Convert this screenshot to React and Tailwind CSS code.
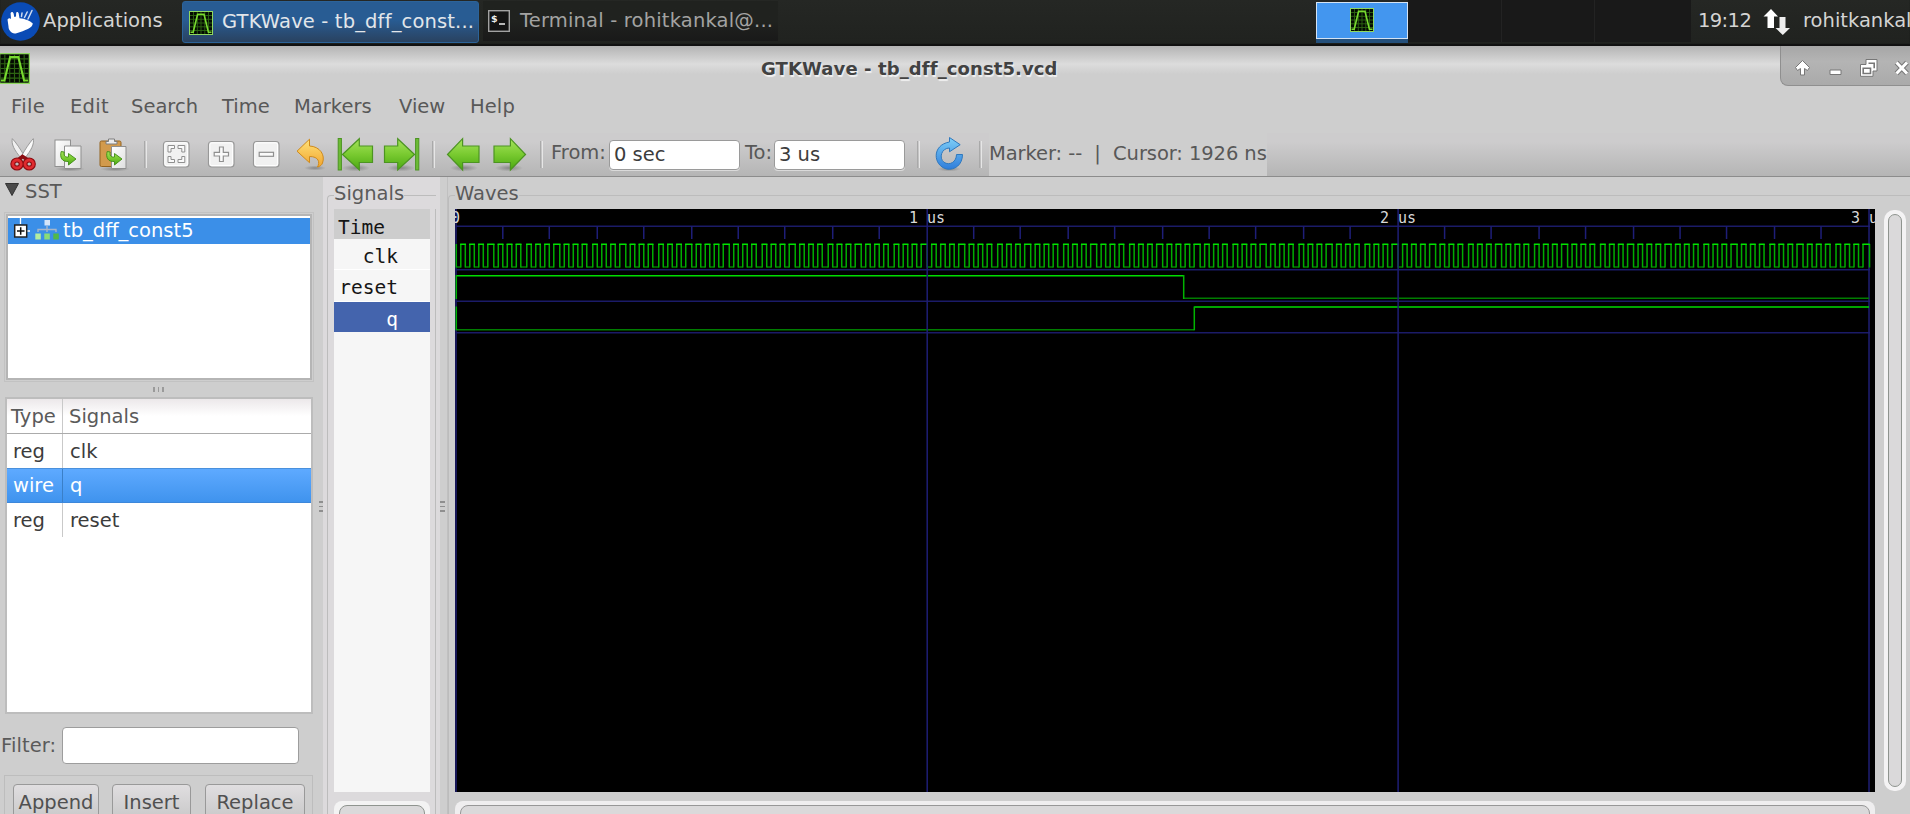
import React from "react";

const UNIT = 1.4997;
const X0 = 1.3;
const gx = (u) => +(X0 + u * UNIT).toFixed(2);

function clockPaths() {
  let high = "";
  let low = "";
  let edges = "";
  for (let k = 0; k < 300; k++) {
    const a = gx(Math.floor(k * 3.14 + 1e-6));
    const b = gx(Math.floor((k + 1) * 3.14 + 1e-6));
    if (k % 2) high += `M${a - 0.7} 35.2H${b + 0.7}`;
    else low += `M${a} 58H${b}`;
    edges += `M${a} 35V58.6`;
  }
  edges += `M${gx(942) + 0.5} 35V58.6`;
  return { high, low, edges };
}
const CLK = clockPaths();

const TICKS = Array.from({ length: 29 }, (_, i) => i + 1)
  .filter((i) => i % 10)
  .map((i) => `M${gx(Math.floor(i * 31.4 + 1e-6))} 17.3V30`)
  .join("");

function WaveIcon({ className }) {
  return (
    <svg viewBox="0 0 24 24" className={className}>
      <rect x="0.5" y="0.5" width="23" height="23" fill="#040a02" stroke="#8fd860" />
      <path d="M4.500 1V23M8.300 1V23M12 1V23M15.800 1V23M19.500 1V23M1 4.500H23M1 8.300H23M1 12H23M1 15.800H23M1 19.500H23" stroke="#2d6412" strokeWidth="0.9" />
      <path d="M1.500 21.300H4.200L8.600 3.200H15L19.400 21.300H22.500" fill="none" stroke="#78da30" strokeWidth="1.600" />
    </svg>
  );
}

function Defs() {
  return (
    <svg className="absolute h-0 w-0">
      <defs>
        <linearGradient id="green" x1="0" y1="0" x2="0" y2="1">
          <stop offset="0" stopColor="#a5e35c" />
          <stop offset="0.5" stopColor="#79ca30" />
          <stop offset="1" stopColor="#4ba812" />
        </linearGradient>
        <linearGradient id="gold" x1="0" y1="0" x2="0" y2="1">
          <stop offset="0" stopColor="#ffe27a" />
          <stop offset="1" stopColor="#f2a52e" />
        </linearGradient>
        <linearGradient id="blue" x1="0" y1="0" x2="0" y2="1">
          <stop offset="0" stopColor="#7fd0f8" />
          <stop offset="1" stopColor="#2e7ddb" />
        </linearGradient>
        <linearGradient id="paper" x1="0" y1="0" x2="1" y2="1">
          <stop offset="0" stopColor="#ffffff" />
          <stop offset="1" stopColor="#dedede" />
        </linearGradient>
        <radialGradient id="shade">
          <stop offset="0" stopColor="#000" stopOpacity="0.28" />
          <stop offset="1" stopColor="#000" stopOpacity="0" />
        </radialGradient>
      </defs>
    </svg>
  );
}

const ICON = "-mt-[2px] mr-[2px] block h-[36px] w-[40px] shrink-0";

function Scissors() {
  return (
    <svg viewBox="0 0 40 36" className={ICON}>
      <path d="M9.300 2.600C8.200 8 11 14 18.300 22.400L21.400 20.200C17.500 13 13 6.500 9.300 2.600Z" fill="#f0f0f0" stroke="#9a9a9a" />
      <path d="M30.300 2.600C31.400 8 28.500 14 21.500 22.400L18.400 20.200C22.300 13 26.700 6.500 30.300 2.600Z" fill="#fafafa" stroke="#9a9a9a" />
      <ellipse cx="14" cy="28" rx="4.200" ry="4" fill="none" stroke="#8c0d12" strokeWidth="5" />
      <ellipse cx="26.200" cy="28" rx="4.200" ry="4" fill="none" stroke="#8c0d12" strokeWidth="5" />
      <path d="M15 24L19.500 20.500L25 24" fill="none" stroke="#8c0d12" strokeWidth="3.600" />
      <ellipse cx="14" cy="28" rx="4.200" ry="4" fill="none" stroke="#e02b2f" strokeWidth="2.800" />
      <ellipse cx="26.200" cy="28" rx="4.200" ry="4" fill="none" stroke="#e02b2f" strokeWidth="2.800" />
    </svg>
  );
}

function GreenHook() {
  return (
    <path d="M14.200 15.500C12.500 21.500 15 26 21.500 25.500V29L29 23L21.500 17.500V21C18 21.500 16.500 19.500 17.200 16Z" fill="url(#green)" stroke="#3e8b14" strokeWidth="0.9" />
  );
}

function CopyIcon() {
  return (
    <svg viewBox="0 0 40 36" className={ICON}>
      <ellipse cx="22" cy="33" rx="15" ry="2.500" fill="url(#shade)" />
      <rect x="7" y="4" width="15.500" height="26.500" fill="url(#paper)" stroke="#8f8f8f" />
      <path d="M16.500 10H33V32.500H16.500Z" fill="url(#paper)" stroke="#8f8f8f" />
      <g transform="translate(-1 0)"><GreenHook /></g>
    </svg>
  );
}

function PasteIcon() {
  return (
    <svg viewBox="0 0 40 36" className={ICON}>
      <ellipse cx="22" cy="33" rx="15" ry="2.500" fill="url(#shade)" />
      <rect x="7" y="5" width="21" height="25.500" rx="1.500" fill="#d29a4c" stroke="#93621f" />
      <path d="M13 8V5.500H15.500V3H21.500V5.500H24V8Z" fill="#ececec" stroke="#7d7d7d" />
      <path d="M18.500 10.500H33V32.500H18.500Z" fill="url(#paper)" stroke="#8f8f8f" />
      <GreenHook />
    </svg>
  );
}

function ZoomBox({ kind }) {
  return (
    <svg viewBox="0 0 40 36" className={ICON}>
      <rect x="7.500" y="5.500" width="25.500" height="25.500" rx="3" fill="#f1f1f1" stroke="#989898" strokeWidth="1.200" />
      <rect x="8.900" y="6.900" width="22.700" height="22.700" rx="2" fill="none" stroke="#fff" />
      {kind === "fit" && (
        <path d="M12 9.500H18.500V12.500H15V16H12ZM28.800 9.500H22V12.500H25.800V16H28.800ZM12 26.500H18.500V23.500H15V20.500H12ZM28.800 26.500H22V23.500H25.800V20.500H28.800Z" fill="#fafafa" stroke="#8f8f8f" strokeWidth="1" />
      )}
      {kind === "in" && (
        <path d="M18.500 11H22.300V16.300H27.500V20H22.300V25.500H18.500V20H13.200V16.300H18.500Z" fill="#fafafa" stroke="#8f8f8f" strokeWidth="1.200" />
      )}
      {kind === "out" && <rect x="13.200" y="16.300" width="14.300" height="4" fill="#fafafa" stroke="#8f8f8f" strokeWidth="1.200" />}
    </svg>
  );
}

function Undo() {
  return (
    <svg viewBox="0 0 40 36" className={ICON}>
      <ellipse cx="24" cy="32" rx="11" ry="2.500" fill="url(#shade)" />
      <path d="M6 15.200L18.500 3.200V10C29 10.500 34.500 19 31.500 27C31 28.700 29 30.600 26.500 31C29 26.500 28 20.500 18.500 20.500V26.700Z" fill="url(#gold)" stroke="#cf8a1c" strokeWidth="1" />
    </svg>
  );
}

function GreenArrow({ flip, bar }) {
  return (
    <svg viewBox="0 0 40 36" className={ICON}>
      <g transform={flip ? "translate(40 0) scale(-1 1)" : undefined}>
        <ellipse cx="20" cy="32" rx="14" ry="3.500" fill="url(#shade)" />
        <path
          d={bar ? "M6.500 18.500L23.300 2.700V10H36.500V26.500H23.300V34Z" : "M3.500 18.500L18.600 2.700V10H35V26.500H18.600V34Z"}
          fill="url(#green)"
          stroke="#4c9422"
          strokeWidth="1.200"
        />
        {bar && <rect x="2.200" y="2.500" width="3.200" height="31.500" fill="#6cbb35" stroke="#4c9422" />}
      </g>
    </svg>
  );
}

function Reload() {
  return (
    <svg viewBox="0 0 40 36" className={ICON}>
      <ellipse cx="20" cy="33" rx="12" ry="2.500" fill="url(#shade)" />
      <path d="M20.500 1.500L31.200 8.700L20.500 15.800V12C12.500 12 9.500 22 15 26.300C20.500 30 27.500 26 27.500 18.500H33.500C33.500 29 25.500 34.500 17.500 33C4 29.500 2.500 9 20.500 6Z" fill="url(#blue)" stroke="#2f78bd" strokeWidth="1" />
    </svg>
  );
}

const Slot = ({ children }) => <div className="flex w-[45px] shrink-0 justify-center">{children}</div>;
const Sep = () => (
  <div className="flex w-[18px] shrink-0 justify-center">
    <div className="h-[27px] w-[3px] border-l border-r border-l-[#a9a9a9] border-r-[#e6e6e6]" />
  </div>
);

function TopPanel() {
  return (
    <header className="flex h-[46px] w-full shrink-0 overflow-hidden bg-linear-to-b from-[#252724] to-[#20221f] text-[19.5px] leading-[42px] whitespace-nowrap text-[#d4d4d3] shadow-[inset_0_-2px_1px_#101010]">
      <div className="w-[43px] shrink-0 pt-[2px] pl-px">
        <svg viewBox="0 0 39 39" className="block h-[39px] w-[39px]">
          <circle cx="19.500" cy="19.500" r="19.300" fill="#0a4bb5" />
          <path d="M6.500 17.500C8 15.500 9 16 10 17L9.600 11C10.400 9.300 12.200 9.800 12.600 11.500L13.300 15L15 14.500L15.200 10.500C16 9.500 17.500 10 17.700 11.500L18.500 16.200C24 16.500 29 19 31.700 21.300C32 26 24 28.500 15.500 31.200C10.500 32.500 7.500 28 7.500 24.500Z" fill="#fff" />
          <path d="M23.500 15.500L26.200 10M27 17L31 8.500M20.500 14.500L21 11" stroke="#fff" strokeWidth="1.500" strokeLinecap="round" opacity="0.8" />
        </svg>
      </div>
      <div className="w-[139px] shrink-0 tracking-[0.05px]">Applications</div>
      <div className="mt-px flex h-[42px] w-[297px] shrink-0 items-center rounded-[3px] border border-[#2c6399] bg-linear-to-b from-[#285c93] from-45% to-[#294260] pl-[6px] text-[#e2e6ea]">
        <WaveIcon className="mt-px mr-[9px] block h-[24px] w-[24px] shrink-0" />
        <span className="tracking-[0.15px]">GTKWave - tb_dff_const...</span>
      </div>
      <div className="mt-px ml-[4px] flex h-[40px] w-[295px] shrink-0 items-center bg-linear-to-b from-[#20221f] from-50% to-[#191919] pl-[5px] text-[#a3a3a2]">
        <svg viewBox="0 0 22 22" className="mr-[10px] block h-[22px] w-[22px] shrink-0">
          <rect x="0.700" y="0.700" width="20.600" height="20.600" fill="#141414" stroke="#a2a2a2" strokeWidth="1.400" />
          <text x="3" y="12" fontSize="9.500" fontWeight="bold" fill="#eee">$</text>
          <path d="M11 14H17" stroke="#eee" strokeWidth="1.500" />
        </svg>
        <span className="tracking-[0.18px]">Terminal - rohitkankal@...</span>
      </div>
      <div className="mt-[2px] ml-[538px] h-[41px] w-[92px] shrink-0 border-b-[4px] border-[#25507b]">
        <div className="flex h-[37px] justify-center border-[1.5px] border-[#d5e3f3] bg-[#4396ef] pt-[5px]">
          <WaveIcon className="block h-[24px] w-[24px]" />
        </div>
      </div>
      <div className="flex h-[42px] w-[283px] shrink-0 gap-px bg-[#232323]">
        <div className="w-[93px] bg-[#191919]" />
        <div className="w-[92px] bg-[#191919]" />
        <div className="w-[96px] bg-[#191919]" />
      </div>
      <div className="w-[72px] shrink-0 pl-[7px] tracking-[-0.6px]">19:12</div>
      <svg viewBox="0 0 28 28" className="mt-[8px] block h-[28px] w-[28px] shrink-0">
        <path d="M8 1L15 8.500H11V20H4.500V8.500H0.500Z" fill="#fff" />
        <path d="M16.500 9H22.500V20H27L19.800 27L12.500 20H16.500Z" fill="#eee" />
      </svg>
      <div className="ml-[11px] w-[108px] shrink-0 overflow-hidden pl-px">rohitkankal</div>
    </header>
  );
}

function TitleBar() {
  return (
    <div className="flex h-[40px] w-full shrink-0 bg-linear-to-b from-[#b4b4b4] via-[#dcdcdc] via-45% to-[#cecece] to-70%">
      <div className="w-[761px] pt-[7px]">
        <WaveIcon className="-ml-px block h-[31px] w-[31px]" />
      </div>
      <div className="flex-1 pt-[8px] text-[18px] leading-[30px] font-bold tracking-[0.1px] whitespace-nowrap text-[#424242] [text-shadow:1px_1.500px_1px_#f2f2f2]">
        GTKWave - tb_dff_const5.vcd
      </div>
      <div className="h-[40px] w-[130px] overflow-hidden rounded-bl-[8px] border-b-[1.500px] border-l border-[#8f8f8f] bg-linear-to-b from-[#a6a6a6] via-[#b4b4b4] via-40% to-[#aaaaaa]">
        <svg viewBox="0 0 130 40" className="block h-[40px] w-[130px]">
          <g fill="#fff" stroke="#777" strokeWidth="1" strokeLinejoin="round">
            <path d="M21.500 14.500L28.500 21.500L26.500 24.500L23.500 22.500V29H19.500V22.500L16.500 24.500L14.500 21.500Z" />
            <rect x="49" y="24" width="11" height="4.500" />
            <path d="M85 13.500H96V25H92V30.300H79.500V18.500H85Z" />
          </g>
          <path d="M82.200 22.300H89.500V27.500H82.200ZM87.500 17.300H93.200V22.300" fill="none" stroke="#777" strokeWidth="1.600" />
          <path d="M115.500 16.500L126 27.500M126 16.500L115.500 27.500" stroke="#777" strokeWidth="5" />
          <path d="M115.500 16.500L126 27.500M126 16.500L115.500 27.500" stroke="#fff" strokeWidth="3" />
        </svg>
      </div>
    </div>
  );
}

function MenuBar() {
  return (
    <nav className="flex h-[47px] shrink-0 pl-[11px] text-[19.5px] leading-[41px] text-[#585858]">
      <span className="w-[59px] tracking-[0.4px]">File</span>
      <span className="w-[61px] tracking-[0.3px]">Edit</span>
      <span className="w-[91px]">Search</span>
      <span className="w-[72px]">Time</span>
      <span className="w-[105px]">Markers</span>
      <span className="w-[71px]">View</span>
      <span className="tracking-[0.1px]">Help</span>
    </nav>
  );
}

function Toolbar() {
  return (
    <div className="flex h-[44px] w-full shrink-0 items-center overflow-hidden border-b border-[#8c8c8c] bg-linear-to-b from-[#cdcccd] from-20% to-[#b5b5b5] pl-px text-[19.5px] whitespace-nowrap text-[#585858]">
      <Slot><Scissors /></Slot>
      <Slot><CopyIcon /></Slot>
      <Slot><PasteIcon /></Slot>
      <Sep />
      <Slot><ZoomBox kind="fit" /></Slot>
      <Slot><ZoomBox kind="in" /></Slot>
      <Slot><ZoomBox kind="out" /></Slot>
      <Slot><Undo /></Slot>
      <Slot><GreenArrow bar /></Slot>
      <Slot><GreenArrow bar flip /></Slot>
      <Sep />
      <Slot><GreenArrow /></Slot>
      <Slot><GreenArrow flip /></Slot>
      <Sep />
      <div className="-mt-[3px] w-[59px] shrink-0 pl-px">From:</div>
      <Field>0 sec</Field>
      <div className="-mt-[3px] w-[34px] shrink-0 pl-[5px]">To:</div>
      <Field>3 us</Field>
      <div className="ml-[4px]"><Sep /></div>
      <Slot><Reload /></Slot>
      <div className="-ml-px"><Sep /></div>
      <div className="h-[44px] w-[278px] shrink-0 bg-[#cecece] leading-[41px] tracking-[-0.08px] whitespace-pre">{"Marker: --  |  Cursor: 1926 ns"}</div>
    </div>
  );
}

function Field({ children }) {
  return (
    <div className="h-[30px] w-[131px] shrink-0 rounded-[4px] border-[1.500px] border-[#9a9a9a] bg-white pl-[4px] leading-[28px] text-[#3c3c3c] shadow-[0_1px_0_#dadada]">
      {children}
    </div>
  );
}

const ROWS = [
  ["reg", "clk"],
  ["wire", "q"],
  ["reg", "reset"],
];

function SidePanel() {
  return (
    <aside className="flex h-full w-[323px] shrink-0 flex-col overflow-hidden text-[19.5px] whitespace-nowrap text-[#5a5a5a]">
      <div className="flex h-[35px] shrink-0">
        <svg viewBox="0 0 14 13" className="mt-[6px] ml-[5px] block h-[13px] w-[14px]">
          <path d="M0.500 0.500H13.500L7 12.500Z" fill="#4a4a4a" stroke="#333" />
        </svg>
        <span className="ml-[6px] leading-[30px]">SST</span>
      </div>
      <div className="ml-[4px] h-[170px] w-[310px] shrink-0 border border-[#c2c2c2] p-px">
        <div className="h-full border-2 border-[#b5b5b5] bg-white">
          <div className="mt-[2px] flex h-[26px] bg-[#3b8fe8] text-white">
            <svg viewBox="0 0 56 26" className="-ml-px block h-[26px] w-[56px] shrink-0">
              <path d="M13.500 0V6M20 13H23" stroke="#fff" strokeWidth="1.300" />
              <rect x="7.700" y="7" width="12" height="12" fill="#fff" stroke="#222" strokeWidth="1.500" />
              <path d="M10 13H17.500M13.700 9.300V16.700" stroke="#111" strokeWidth="1.500" />
              <path d="M31 14V11.500H49V14M40 8V14" fill="none" stroke="#a7b6c9" strokeWidth="1.400" />
              <rect x="37.500" y="2" width="5.500" height="5.500" fill="#d3e5fa" />
              <rect x="28.300" y="15.500" width="5.500" height="6" fill="#b4eda0" />
              <rect x="37.300" y="15.500" width="5.500" height="6" fill="#8bdc78" />
              <rect x="46.300" y="15.500" width="5.500" height="6" fill="#52b848" />
            </svg>
            <span className="leading-[25px]">tb_dff_const5</span>
          </div>
        </div>
      </div>
      <div className="flex h-[15px] shrink-0 items-center gap-[3px] pl-[153px]">
        <i className="h-[5px] w-[1.500px] bg-[#9a9a9a]" />
        <i className="h-[5px] w-[1.500px] bg-[#9a9a9a]" />
        <i className="h-[5px] w-[1.500px] bg-[#9a9a9a]" />
      </div>
      <div className="ml-[5px] flex h-[317px] w-[308px] shrink-0 flex-col border-2 border-[#bdbdbd] bg-white">
        <div className="flex h-[35px] border-b border-[#ababab] bg-linear-to-b from-[#ece8ea] to-white to-50% leading-[36px]">
          <div className="w-[56px] border-r border-[#c9c9c9] pl-[4px]">Type</div>
          <div className="pl-[6px]">Signals</div>
        </div>
        {ROWS.map(([t, s], i) =>
          i === 1 ? (
            <div key={s} className="flex h-[35px] border-t border-b border-t-[#4a90dc] border-b-[#3d87da] bg-linear-to-b from-[#5eaaff] to-[#3f93ee] leading-[34px] text-white">
              <div className="w-[56px] border-r border-[#3a7fc8] pl-[6px]">{t}</div>
              <div className="pl-[7px]">{s}</div>
            </div>
          ) : (
            <div key={s} className="flex h-[34px] leading-[35px] text-[#3c3c3c]">
              <div className="w-[56px] border-r border-[#c9c9c9] pl-[6px]">{t}</div>
              <div className="pl-[7px]">{s}</div>
            </div>
          )
        )}
      </div>
      <div className="flex h-[61px] shrink-0 pt-[13px] pl-px">
        <span className="w-[61px] leading-[37px] tracking-[0.1px]">Filter:</span>
        <div className="h-[37px] w-[237px] rounded-[4px] border-[1.500px] border-[#9d9d9d] bg-white" />
      </div>
      <div className="ml-[4px] flex h-[60px] w-[309px] shrink-0 border border-[#bdbdbd] pt-[8px] pl-[8px] text-center leading-[36px] text-[#505050]">
        <div className="h-[40px] w-[86px] shrink-0 rounded-[4px] border border-[#999] bg-linear-to-b from-[#e0dee0] to-[#c6c6c6]">Append</div>
        <div className="ml-[13px] h-[40px] w-[79px] shrink-0 rounded-[4px] border border-[#999] bg-linear-to-b from-[#e0dee0] to-[#c6c6c6]">Insert</div>
        <div className="ml-[14px] h-[40px] w-[100px] shrink-0 rounded-[4px] border border-[#999] bg-linear-to-b from-[#e0dee0] to-[#c6c6c6]">Replace</div>
      </div>
    </aside>
  );
}

function Legend({ children }) {
  return (
    <div className="flex h-[32px] shrink-0 text-[19.5px] leading-[33px] text-[#5a5a5a]">
      <div className="mt-[18px] h-[14px] w-[7px] shrink-0 rounded-tl-[4px] border-t border-l border-[#bcbcbc]" />
      <span className="shrink-0">{children}</span>
      <div className="mt-[18px] h-px flex-1 bg-[#bcbcbc]" />
    </div>
  );
}

function Grip() {
  return (
    <div className="flex flex-col gap-[3px]">
      <i className="h-[1.500px] w-[5px] bg-[#8f8f8f]" />
      <i className="h-[1.500px] w-[5px] bg-[#8f8f8f]" />
      <i className="h-[1.500px] w-[5px] bg-[#8f8f8f]" />
    </div>
  );
}

function SignalsPanel() {
  return (
    <section className="flex h-full w-[117px] shrink-0 flex-col bg-[#dcdadc]">
      <div className="ml-[4px] flex h-full w-[109px] flex-col">
        <Legend>Signals</Legend>
        <div className="flex flex-1 flex-col border-r border-l border-[#bcbcbc] pr-[5px] pl-[6px] font-['DejaVu_Sans_Mono',monospace] text-[19.5px] whitespace-pre text-[#151515]">
          <div className="h-[30px] bg-[#cdcdcd] pl-[4px] leading-[37px]">Time</div>
          <div className="h-[31px] border-b border-white bg-[#f6f6f6] pr-[32px] text-right leading-[35px]">clk</div>
          <div className="h-[31.500px] border-b border-white bg-[#f6f6f6] pr-[32px] text-right leading-[35px]">reset</div>
          <div className="h-[30px] bg-[#4464ad] pr-[32px] text-right leading-[36px] text-white">q</div>
          <div className="h-[460.500px] bg-[#f6f6f6]" />
          <div className="mt-[9px] h-[13px] overflow-hidden rounded-t-[8px] bg-[#f3f3f3] px-[5px] pt-[4px]">
            <div className="h-[30px] rounded-[8px] border-[1.500px] border-[#8f948f] bg-[#dad9da]" />
          </div>
        </div>
      </div>
    </section>
  );
}

function WaveView() {
  return (
    <svg viewBox="0 0 1420 583" className="block h-[583px] w-[1420px] shrink-0 bg-black">
      <g fill="none" strokeWidth="1.500">
        <path d="M1.300 17.300H1415M1.300 60.700H1415M1.300 92.200H1415M1.300 123.700H1415" stroke="#1b1b68" />
        <path d={TICKS} stroke="#1e1e78" />
        <path d={`M1 0V583M${gx(942)} 0V583`} stroke="#1e1e74" />
        <path d={CLK.low} stroke="#007d00" />
        <path d={CLK.edges} stroke="#00ac00" />
        <path d={CLK.high} stroke="#00e400" />
        <path d="M1.300 66.700H728.700M739.300 98H1414" stroke="#00dc00" />
        <path d="M728.700 89.300H1414M1.300 120.700H739.300" stroke="#007d00" />
        <path d="M1.300 66V90M728.700 66V90M1.300 97.500V121.300M739.300 97.500V121.300" stroke="#00b400" />
        <path d={`M${gx(314)} 0V583M${gx(628)} 0V583`} stroke="#1e1e74" />
      </g>
      <g fill="#d8d8d8" fontFamily="DejaVu Sans Mono, monospace" fontSize="15">
        <text x="-4" y="13.500">0</text>
        <text x="454" y="13.500">1 us</text>
        <text x="925" y="13.500">2 us</text>
        <text x="1396" y="13.500">3 us</text>
      </g>
    </svg>
  );
}

function WavesPanel() {
  return (
    <section className="flex h-full min-w-0 flex-1 flex-col">
      <Legend>Waves</Legend>
      <div className="flex min-h-0 flex-1 border-l border-[#bcbcbc] pl-[6px]">
        <div className="flex w-[1420px] shrink-0 flex-col">
          <WaveView />
          <div className="mt-[9px] h-[13px] overflow-hidden rounded-t-[8px] bg-[#efeeef] px-[5px] pt-[4px]">
            <div className="h-[30px] rounded-[8px] border-[1.500px] border-[#979797] bg-[#dad9da]" />
          </div>
        </div>
        <div className="mt-px ml-[9px] h-[581px] w-[22px] shrink-0 rounded-[10px] bg-[#f4f3f4] px-[4px] py-[4px]">
          <div className="h-full rounded-[8px] border-[1.500px] border-[#8f948f] bg-[#dad9da]" />
        </div>
      </div>
    </section>
  );
}

export default function App() {
  return (
    <div className="flex h-[814px] w-[1910px] flex-col overflow-hidden bg-[#cecece] font-['DejaVu_Sans',sans-serif]">
      <Defs />
      <TopPanel />
      <TitleBar />
      <MenuBar />
      <Toolbar />
      <main className="flex min-h-0 flex-1">
        <SidePanel />
        <div className="-ml-[4px] flex w-[4px] shrink-0 flex-col pt-[324px]"><Grip /></div>
        <SignalsPanel />
        <div className="flex w-[8px] shrink-0 flex-col border-r border-[#c0c0c0] pt-[324px]"><Grip /></div>
        <WavesPanel />
      </main>
    </div>
  );
}
